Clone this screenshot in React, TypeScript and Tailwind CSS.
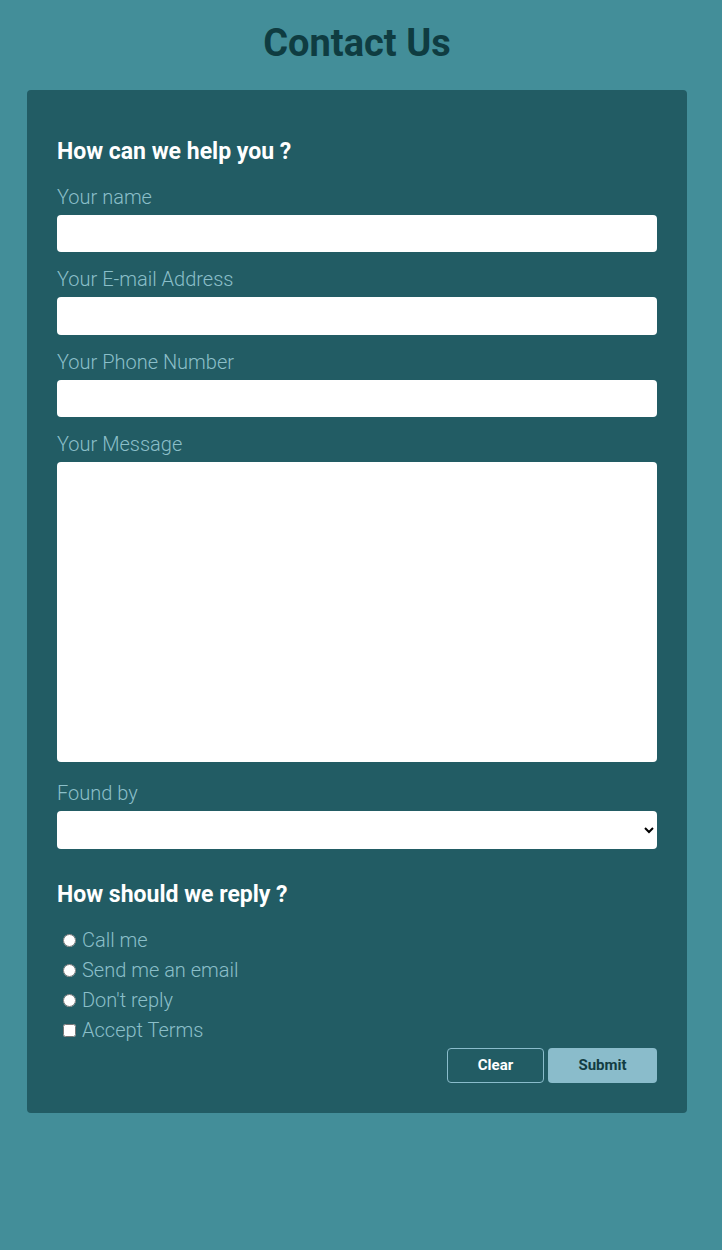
import React, { useState } from 'react';

const labelCls = 'block text-[20px] font-light leading-6 text-[#8bbfc9] mb-[6px]';
const fieldCls = 'block w-full h-[37px] rounded bg-white px-2 text-black outline-none';

export default function App() {
  const [reply, setReply] = useState('');
  const [terms, setTerms] = useState(false);

  return (
    <div className="min-h-[1250px] bg-[#438e99] font-['Roboto',sans-serif]">
      <div className="w-[714px] pt-[23px]">
        <h1 className="text-center text-[38px] font-bold leading-10 text-[#0f3c41] mb-[27px]">Contact Us</h1>

        <form
          className="mx-[27px] rounded bg-[#225c64] px-[30px] pt-[48px] pb-[30px]"
          onSubmit={(e) => e.preventDefault()}
        >
          <h2 className="text-[23px] font-bold leading-7 text-white mb-[19px]">How can we help you ?</h2>

          <label className={labelCls}>Your name</label>
          <input type="text" className={fieldCls + ' mb-[15px]'} />

          <label className={labelCls}>Your E-mail Address</label>
          <input type="email" className={fieldCls + ' h-[38px] mb-[15px]'} />

          <label className={labelCls}>Your Phone Number</label>
          <input type="tel" className={fieldCls + ' mb-[15px]'} />

          <label className={labelCls}>Your Message</label>
          <textarea className="block w-full h-[300px] rounded bg-white p-2 text-black outline-none resize-none mb-[19px]" />

          <label className={labelCls}>Found by</label>
          <select className="block w-full h-[38px] rounded bg-white px-1 text-black outline-none">
            <option value=""></option>
            <option value="search">Search engine</option>
            <option value="friend">A friend</option>
            <option value="ad">Advertisement</option>
          </select>

          <h2 className="text-[23px] font-bold leading-7 text-white mt-[32px] mb-[16px]">How should we reply ?</h2>

          <div className="flex flex-col text-[20px] font-light text-[#8bbfc9]">
            {['Call me', 'Send me an email', "Don't reply"].map((opt) => (
              <label key={opt} className="flex h-[30px] items-center">
                <input
                  type="radio"
                  name="reply"
                  checked={reply === opt}
                  onChange={() => setReply(opt)}
                  className="ml-[6px] mr-[6px] h-[13px] w-[13px]"
                />
                {opt}
              </label>
            ))}
            <label className="flex h-[30px] items-center">
              <input
                type="checkbox"
                checked={terms}
                onChange={(e) => setTerms(e.target.checked)}
                className="ml-[6px] mr-[6px] h-[13px] w-[13px]"
              />
              Accept Terms
            </label>
          </div>

          <div className="flex justify-end gap-1 mt-[3px]">
            <button
              type="reset"
              className="h-[35px] w-[97px] rounded border border-[#8abccb] text-[15px] font-bold text-white"
            >
              Clear
            </button>
            <button
              type="submit"
              className="h-[35px] w-[109px] rounded bg-[#8abccb] text-[15px] font-bold text-[#123c42]"
            >
              Submit
            </button>
          </div>
        </form>
      </div>
    </div>
  );
}
